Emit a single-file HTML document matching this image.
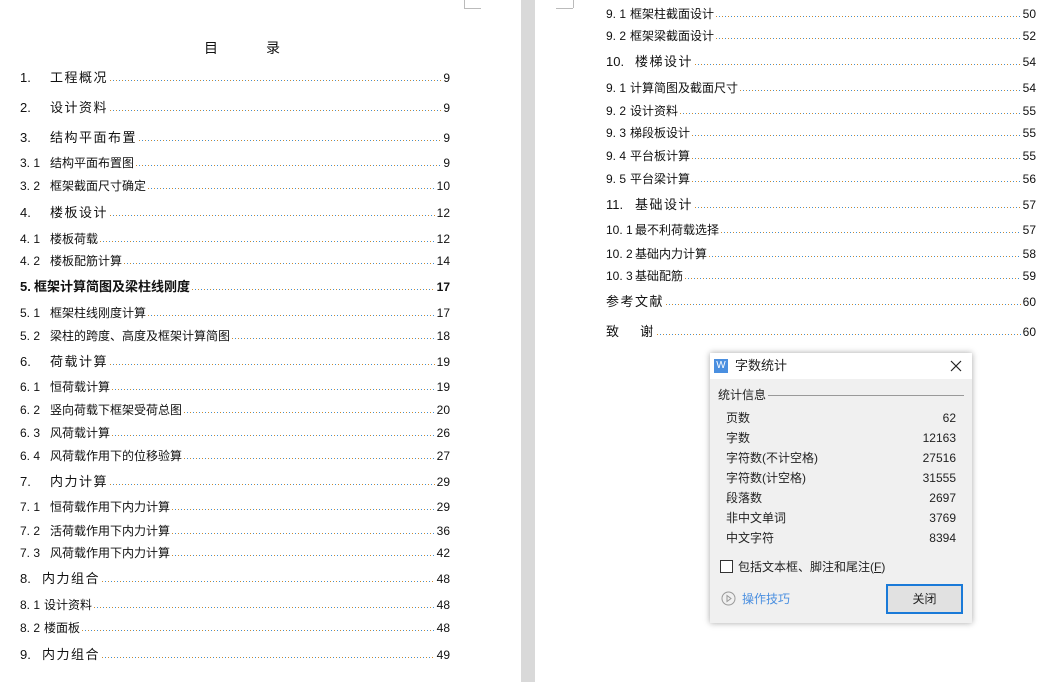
<!DOCTYPE html>
<html><head><meta charset="utf-8"><style>
*{margin:0;padding:0;box-sizing:border-box}
body{width:1059px;height:682px;overflow:hidden;background:#fff;position:relative;font-family:"Liberation Sans","Noto Sans CJK SC",sans-serif;color:#111}
.gap{position:absolute;left:521px;top:0;width:14px;height:682px;background:#d9d9d9}
.r{position:absolute;display:flex;align-items:baseline;white-space:nowrap;height:18px;line-height:18px}
.r .n{display:inline-block}
.r .l{flex:1;height:1px;margin:0 2px;align-self:center;margin-top:5px;background:repeating-linear-gradient(90deg,#d08a2a 0 1px,transparent 1px 3px,#3d8fd6 3px 4px,transparent 4px 6px)}
.m{font-size:13px;letter-spacing:1.5px}
.s{font-size:12px}
.p{font-size:12px;letter-spacing:0}
.mark{position:absolute;width:1px;height:8px;background:#bbb}
</style></head><body>
<div class="gap"></div>
<div class="mark" style="left:464px;top:0"></div><div style="position:absolute;left:464px;top:8px;width:17px;height:1px;background:#bbb"></div>
<div class="mark" style="left:573px;top:0"></div><div style="position:absolute;left:556px;top:8px;width:17px;height:1px;background:#bbb"></div>
<div style="position:absolute;left:204px;top:38px;font-size:14px">目</div>
<div style="position:absolute;left:266px;top:38px;font-size:14px">录</div>
<div id="L"></div>
<div id="R"></div>
<script>
var L=[[78,'1.','工程概况','9','m'],[108,'2.','设计资料','9','m'],[138,'3.','结构平面布置','9','m'],[163,'3. 1','结构平面布置图','9','s'],[186,'3. 2','框架截面尺寸确定','10','s'],[213,'4.','楼板设计','12','m'],[239,'4. 1','楼板荷载','12','s'],[261,'4. 2','楼板配筋计算','14','s'],[287,'5.','框架计算简图及梁柱线刚度','17','b'],[313,'5. 1','框架柱线刚度计算','17','s'],[336,'5. 2','梁柱的跨度、高度及框架计算简图','18','s'],[362,'6.','荷载计算','19','m'],[387,'6. 1','恒荷载计算','19','s'],[410,'6. 2','竖向荷载下框架受荷总图','20','s'],[433,'6. 3','风荷载计算','26','s'],[456,'6. 4','风荷载作用下的位移验算','27','s'],[482,'7.','内力计算','29','m'],[507,'7. 1','恒荷载作用下内力计算','29','s'],[531,'7. 2','活荷载作用下内力计算','36','s'],[553,'7. 3','风荷载作用下内力计算','42','s'],[579,'8.','内力组合','48','m8'],[605,'8. 1','设计资料','48','t'],[628,'8. 2','楼面板','48','t'],[655,'9.','内力组合','49','m8']];
var R=[[14,'9. 1','框架柱截面设计','50','t'],[36,'9. 2','框架梁截面设计','52','t'],[62,'10.','楼梯设计','54','m8'],[88,'9. 1','计算简图及截面尺寸','54','t'],[111,'9. 2','设计资料','55','t'],[133,'9. 3','梯段板设计','55','t'],[156,'9. 4','平台板计算','55','t'],[179,'9. 5','平台梁计算','56','t'],[205,'11.','基础设计','57','m8'],[230,'10. 1','最不利荷载选择','57','t'],[254,'10. 2','基础内力计算','58','t'],[276,'10. 3','基础配筋','59','t'],[302,'','参考文献','60','m0'],[332,'','致　 谢','60','m0']];
function build(arr,x0,x1,id){var h='';arr.forEach(function(a){var t=a[4],nw,cls='s',st='';
if(t=='m'){nw=30;cls='m'}else if(t=='s'){nw=30}else if(t=='b'){nw=14;cls='m';st='font-weight:bold;letter-spacing:0'}else if(t=='m8'){nw=22;cls='m';if(a[1].length>2)nw=29}else if(t=='t'){nw=a[1].length>4?29:24}else{nw=0;cls='m'}
h+='<div class="r '+cls+'" style="left:'+x0+'px;width:'+(x1-x0)+'px;top:'+(a[0]-9)+'px;'+st+'"><span class="n" style="width:'+nw+'px;font-size:'+(cls=='m'?13:12)+'px;letter-spacing:0">'+a[1]+'</span><span>'+a[2]+'</span><span class="l"></span><span class="p">'+a[3]+'</span></div>'});
document.getElementById(id).innerHTML=h}
build(L,20,450,'L');build(R,606,1036,'R');
</script>
<div style="position:absolute;left:710px;top:353px;width:262px;height:270px;background:#f0f0f0;box-shadow:0 0 6px rgba(0,0,0,.35);font-size:12px;color:#222">
 <div style="height:26px;background:#fff;position:relative">
  <div style="position:absolute;left:4px;top:6px;width:14px;height:14px;background:#4a8fe0;color:#fff;font-size:10px;line-height:14px;text-align:center">W</div>
  <div style="position:absolute;left:25px;top:4px;font-size:13px;line-height:18px">字数统计</div>
  <svg style="position:absolute;right:10px;top:7px" width="12" height="12"><path d="M1 1L11 11M11 1L1 11" stroke="#222" stroke-width="1.2"/></svg>
 </div>
 <div style="position:absolute;left:8px;top:33px">统计信息</div>
 <div style="position:absolute;left:58px;top:42px;width:196px;height:1px;background:#999"></div>
 <div style="position:absolute;left:16px;top:55px;width:230px;line-height:20px">
  <div style="display:flex;justify-content:space-between"><span>页数</span><span>62</span></div>
  <div style="display:flex;justify-content:space-between"><span>字数</span><span>12163</span></div>
  <div style="display:flex;justify-content:space-between"><span>字符数(不计空格)</span><span>27516</span></div>
  <div style="display:flex;justify-content:space-between"><span>字符数(计空格)</span><span>31555</span></div>
  <div style="display:flex;justify-content:space-between"><span>段落数</span><span>2697</span></div>
  <div style="display:flex;justify-content:space-between"><span>非中文单词</span><span>3769</span></div>
  <div style="display:flex;justify-content:space-between"><span>中文字符</span><span>8394</span></div>
 </div>
 <div style="position:absolute;left:10px;top:207px;width:13px;height:13px;border:1px solid #333;background:#fff"></div>
 <div style="position:absolute;left:28px;top:205px">包括文本框、脚注和尾注(<u>F</u>)</div>
 <svg style="position:absolute;left:11px;top:238px" width="15" height="15"><circle cx="7.5" cy="7.5" r="6.5" fill="none" stroke="#999"/><path d="M6 4.5L10 7.5L6 10.5Z" fill="none" stroke="#999"/></svg>
 <div style="position:absolute;left:32px;top:237px;color:#4a8fe0">操作技巧</div>
 <div style="position:absolute;left:176px;top:231px;width:77px;height:30px;border:2px solid #1a7ad8;background:#e1e1e1;text-align:center;line-height:26px">关闭</div>
</div>
</body></html>
